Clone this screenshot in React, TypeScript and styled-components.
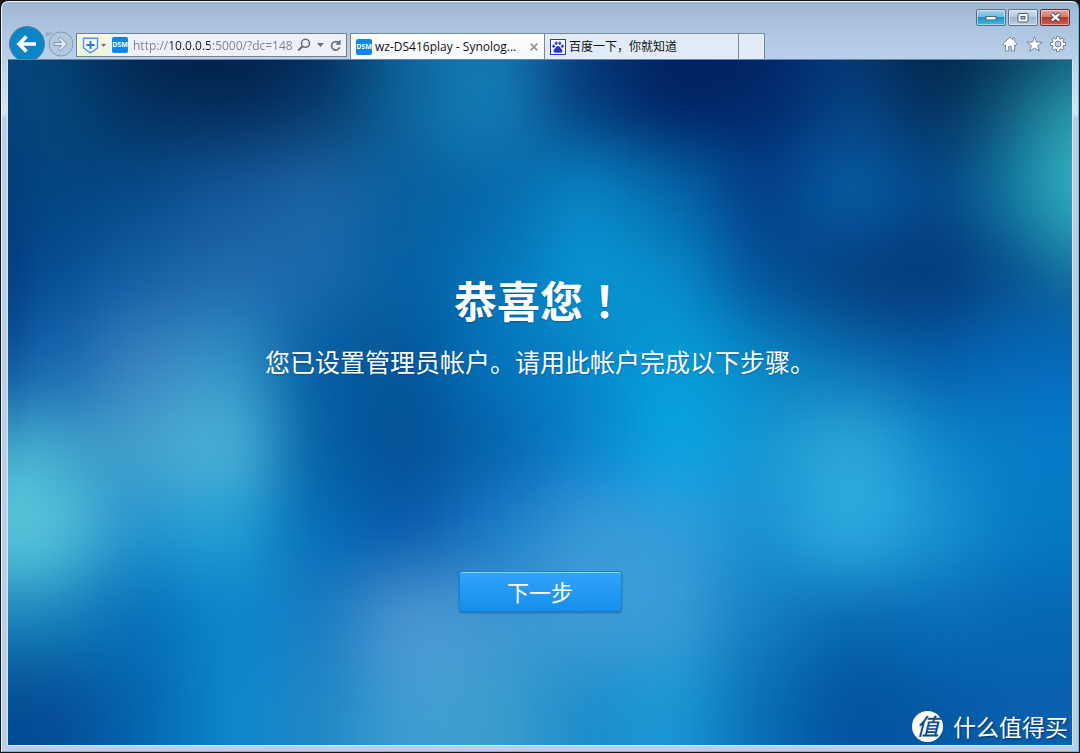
import React from "react";
import styled, { createGlobalStyle, css } from "styled-components";

const uiFont = `"Open Sans", "Noto Sans CJK SC", sans-serif`;
const cjkFont = `"Noto Sans CJK SC", "Noto Sans", sans-serif`;

const GlobalStyle = createGlobalStyle`
  *, *::before, *::after { box-sizing: border-box; }
  html, body { margin: 0; background: #0a0a0c; }
  body { font-family: ${uiFont}; font-size: 12px; }
  button { padding: 0; border: 0; background: none; font: inherit; cursor: pointer; }
`;

const Desktop = styled.div`
  min-height: 100vh;
  padding: 1px;
  display: flex;
  background: #14161c;
`;

const WindowFrame = styled.div`
  flex: 1;
  min-width: 0;
  display: flex;
  flex-direction: column;
  border: 1px solid #eef5fc;
  border-right-color: #4cc9e6;
  border-bottom-color: #4cc9e6;
  border-radius: 7px 7px 0 0;
  background: linear-gradient(#9bb4cf 0, #a9c1dc 18px, #bad1eb 58px, #d6e4f4 112px, #b9cfe9 116px);
`;

const Header = styled.header`
  flex: none;
  height: 57px;
  overflow: hidden;
`;

const CaptionBar = styled.div`
  height: 31px;
  padding: 7px 8px 0 0;
  display: flex;
  justify-content: flex-end;
  gap: 2px;
`;

type Tone = "blue" | "plain" | "red";
const tones = {
  blue: "linear-gradient(#a8d6ec 0, #6fbadc 45%, #1c8fc0 50%, #3cc0e6 100%)",
  plain: "linear-gradient(#cfdff0 0, #b9cce2 45%, #9fb6d0 50%, #bcd2ea 100%)",
  red: "linear-gradient(#e3a79d 0, #d07c70 45%, #b23a2a 50%, #cf6150 100%)",
};

const CaptionButton = styled.button<{ $tone: Tone }>`
  width: 30px;
  height: 17px;
  display: grid;
  place-items: center;
  border: 1px solid ${(p) => (p.$tone === "red" ? "#6b2f3c" : "#5d7189")};
  border-radius: 2px;
  background: ${(p) => tones[p.$tone]};
  box-shadow: inset 0 0 0 1px rgba(255, 255, 255, 0.45);
`;

const Toolbar = styled.div`
  height: 26px;
  padding: 0 10px 0 6px;
  display: flex;
  align-items: flex-start;
`;

const NavButtons = styled.div`
  flex: none;
  display: flex;
  width: 68px;
  margin-top: -8px;

  svg {
    display: block;
  }
`;

const NavButton = styled.button<{ $w: number }>`
  width: ${(p) => p.$w}px;
  height: 38px;
`;

const AddressBar = styled.form`
  flex: none;
  width: 271px;
  height: 24px;
  margin-right: 3px;
  display: flex;
  align-items: center;
  border: 1px solid #747f8c;
  background: #edf2fa;
`;

const ShieldButton = styled.button`
  flex: none;
  width: 33px;
  height: 22px;
  margin-right: 2px;
  display: flex;
  align-items: center;
  justify-content: center;
  gap: 2px;
  background: linear-gradient(#f5f9e6, #edf3d8);
`;

const SiteBadge = styled.span`
  flex: none;
  width: 16px;
  height: 16px;
  border-radius: 2px;
  background: #0d87e9;
  color: #fff;
  font: 700 7px/16px "Open Sans", sans-serif;
  text-align: center;
`;

const UrlField = styled.input`
  flex: 1;
  min-width: 0;
  height: 22px;
  margin-left: 4px;
  padding: 0 0 0 1px;
  border: 0;
  outline: 0;
  font-family: ${uiFont};
  font-size: 12px;
  color: transparent;
  background: linear-gradient(90deg, #7c8087 36px, #16181c 36px, #16181c 78px, #7c8087 78px);
  background-clip: text;
  -webkit-background-clip: text;
`;

const FieldButton = styled.button<{ $w: number }>`
  flex: none;
  width: ${(p) => p.$w}px;
  height: 22px;
  display: grid;
  place-items: center;
`;

const Tabs = styled.nav`
  display: flex;
  height: 26px;
  border-top: 1px solid #78899c;
  border-left: 1px solid #78899c;
`;

const Tab = styled.div<{ $active?: boolean; $narrow?: boolean }>`
  width: ${(p) => (p.$narrow ? 26 : 194)}px;
  height: 26px;
  padding-left: 5px;
  display: flex;
  align-items: center;
  gap: 3px;
  border-right: 1px solid #78899c;
  background: ${(p) => (p.$active ? "linear-gradient(#ffffff, #f4f8fc)" : "#e2ecf9")};
`;

const TabLink = styled.a`
  flex: 1;
  min-width: 0;
  color: #101010;
  font-size: 12px;
  line-height: 24px;
  white-space: nowrap;
  text-decoration: none;
`;

const TabClose = styled.button`
  width: 20px;
  height: 24px;
  display: grid;
  place-items: center;
`;

const Tools = styled.div`
  margin-left: auto;
  display: flex;
  gap: 4px;
`;

const ToolButton = styled.button`
  width: 20px;
  height: 22px;
  display: grid;
  place-items: center;
`;

const Page = styled.main`
  position: relative;
  flex: 1;
  margin: 0 5px 5px;
  border: 1px solid #dbe8f6;
  border-top-color: #6686a5;
  overflow: hidden;
  background: #0568b0;
  color: #fff;
  font-family: ${cjkFont};
`;

const Wallpaper = styled.svg`
  position: absolute;
  inset: 0;
  width: 100%;
  height: 100%;
`;

const Welcome = styled.section`
  position: relative;
  padding: 207px 16px 80px;
  display: flex;
  flex-direction: column;
  align-items: center;
  text-align: center;
`;

const textShadow = css`
  text-shadow: 0 1px 2px rgba(0, 30, 80, 0.35);
`;

const Title = styled.h1`
  margin: 0;
  font-size: 43px;
  font-weight: 700;
  line-height: 64px;
  ${textShadow}
`;

const CenteredMark = styled.span`
  font-family: "Noto Sans CJK TC", sans-serif;
`;

const Message = styled.p`
  margin: 10px 0 0;
  font-size: 25px;
  line-height: 40px;
  ${textShadow}
`;

const NextButton = styled.button`
  && {
    width: 163px;
    height: 41px;
    margin-top: 190px;
    border: 1px solid #1b7fce;
    border-radius: 3px;
    background: linear-gradient(#30a4fd, #168fe8);
    box-shadow: inset 0 1px 0 #8fd0ff, 0 1px 2px rgba(0, 50, 110, 0.4);
    color: #fff;
    font-size: 22px;
    line-height: 39px;
  }
`;

const Watermark = styled.div`
  position: absolute;
  right: 4px;
  bottom: 2px;
  display: flex;
  align-items: center;
  gap: 10px;
  font-size: 23px;
  line-height: 34px;
  white-space: nowrap;
  text-shadow: 1px 1px 2px rgba(0, 20, 60, 0.6);
`;

const Seal = styled.span`
  width: 31px;
  height: 31px;
  border-radius: 50%;
  background: #fff;
  color: #0b4f92;
  font-size: 23px;
  font-weight: 500;
  font-style: italic;
  line-height: 29px;
  text-align: center;
  text-shadow: none;
`;

/* Colour mesh of the wallpaper, softened by a wide blur. */
const mesh = [
  "04457a 04305e 032a58 063768 0c639a 1379b3 063c7b 012464 022c6e 054282 042f5b 126584",
  "02447f 054a88 13579a 1c66a5 09609f 0667a9 0886c6 0568aa 033b87 0560a7 04478a 1684a5",
  "044c92 1460a4 216aae 1a69ad 045fa2 0576ba 0896d1 078cca 045097 044283 03397a 08558f",
  "1464ae 3c83c0 3192c6 045da2 045598 0475bd 0684c8 079ad6 0886c4 0a6fb2 055fab 0569bb",
  "3a9bc8 44a0cb 48b0d6 045fa3 044f94 0563ac 0882ce 09a4e2 1595d0 2aa3d6 0c85ca 077cc8",
  "4cb9d4 2493cf 1f9fd5 056db6 0759ab 1d7cc7 3b9ad7 349edb 188fd0 2aaae0 1690d0 067ac4",
  "1882bb 056eb8 0a86ca 1b7ac1 4b93cf 3b97d2 429cd7 3c9dd7 137ec2 0869b1 0a6eb8 0667b4",
  "044c95 0565ad 0d87cd 1f86c4 3e9ed2 3c9dcc 1d8dca 1a99d4 086db2 02529c 0459a5 0960ae",
].map((row) => row.split(" "));

const glows = [
  { cx: 10, cy: 450, rx: 70, ry: 90, color: "#5fd2de", strength: 0.5 },
  { cx: 1080, cy: 112, rx: 66, ry: 120, color: "#38b9c6", strength: 0.75 },
  { cx: 464, cy: 42, rx: 70, ry: 70, color: "#1787c0", strength: 0.25 },
  { cx: 200, cy: 385, rx: 74, ry: 90, color: "#58bbd8", strength: 0.2 },
  { cx: 850, cy: 425, rx: 90, ry: 96, color: "#35b4e2", strength: 0.3 },
  { cx: 670, cy: 330, rx: 80, ry: 100, color: "#06a9e4", strength: 0.2 },
  { cx: 880, cy: 225, rx: 90, ry: 70, color: "#03316f", strength: 0.2 },
  { cx: 715, cy: -10, rx: 120, ry: 80, color: "#011a5c", strength: 0.4 },
  { cx: 200, cy: -20, rx: 130, ry: 60, color: "#021a42", strength: 0.6 },
  { cx: 955, cy: -20, rx: 120, ry: 60, color: "#031d40", strength: 0.5 },
  { cx: 425, cy: 580, rx: 80, ry: 90, color: "#62a8dc", strength: 0.2 },
  { cx: 0, cy: 200, rx: 30, ry: 160, color: "#032f70", strength: 0.4 },
];

function WallpaperArt() {
  return (
    <Wallpaper viewBox="0 0 1064 686" preserveAspectRatio="none" aria-hidden="true">
      <defs>
        <filter id="soften" filterUnits="userSpaceOnUse" x="-200" y="-200" width="1464" height="1086" colorInterpolationFilters="sRGB">
          <feGaussianBlur stdDeviation="34" />
        </filter>
        {glows.map((g, i) => (
          <radialGradient id={`glow${i}`} key={i}>
            <stop offset="0" stopColor={g.color} stopOpacity={g.strength} />
            <stop offset="0.2" stopColor={g.color} stopOpacity={g.strength * 0.88} />
            <stop offset="0.4" stopColor={g.color} stopOpacity={g.strength * 0.6} />
            <stop offset="0.6" stopColor={g.color} stopOpacity={g.strength * 0.3} />
            <stop offset="0.8" stopColor={g.color} stopOpacity={g.strength * 0.09} />
            <stop offset="1" stopColor={g.color} stopOpacity="0" />
          </radialGradient>
        ))}
      </defs>
      <g filter="url(#soften)" shapeRendering="crispEdges">
        {mesh.map((row, r) =>
          row.map((c, i) => {
            const x0 = i === 0 ? -200 : Math.round(i * 88.67);
            const x1 = i === 11 ? 1264 : Math.round((i + 1) * 88.67);
            const y0 = r === 0 ? -200 : Math.round(r * 85.75);
            const y1 = r === 7 ? 886 : Math.round((r + 1) * 85.75);
            return <rect key={`${r}-${i}`} x={x0} y={y0} width={x1 - x0} height={y1 - y0} fill={`#${c}`} />;
          })
        )}
      </g>
      {glows.map((g, i) => (
        <ellipse key={i} cx={g.cx} cy={g.cy} rx={g.rx * 1.5} ry={g.ry * 1.5} fill={`url(#glow${i})`} />
      ))}
    </Wallpaper>
  );
}

const BackIcon = () => (
  <svg width="38" height="38" viewBox="0 0 38 38">
    <circle cx="19" cy="19" r="17.5" fill="#0b85c6" stroke="#5c7f9f" />
    <path d="M28 19H12M18.5 11.5 11 19l7.500 7.500" fill="none" stroke="#fff" strokeWidth="3.600" />
  </svg>
);

const ForwardIcon = () => (
  <svg width="30" height="38" viewBox="0 0 30 38">
    <path d="M-7 3Q0 8 9 7.500Q3 9-1 14Z" fill="#93a9c4" opacity=".7" />
    <circle cx="15" cy="19" r="12" fill="#b4c8e0" stroke="#8398b3" />
    <path d="M8 17.500h7.500l-3-3.300 2-1.900 6.600 6.700-6.600 6.700-2-1.900 3-3.300H8z" fill="#dce8f5" stroke="#8095b0" />
  </svg>
);

const Caret = () => (
  <svg width="7" height="4" viewBox="0 0 7 4"><path d="M0 0h7L3.500 4z" fill="#6b7078" /></svg>
);

const SmallCaret = () => (
  <svg width="5" height="3" viewBox="0 0 5 3"><path d="M0 0h5L2.500 3z" fill="#6b7078" /></svg>
);

export default function App() {
  return (
    <>
      <GlobalStyle />
      <Desktop>
        <WindowFrame>
          <Header>
            <CaptionBar>
              <CaptionButton $tone="blue" aria-label="最小化">
                <svg width="12" height="6" viewBox="0 0 12 6"><rect x="1" y="1.500" width="10" height="3.500" fill="#fff" stroke="#4c6580" /></svg>
              </CaptionButton>
              <CaptionButton $tone="plain" aria-label="最大化">
                <svg width="12" height="10" viewBox="0 0 12 10">
                  <rect x="1" y=".5" width="10" height="8.500" rx="1" fill="#fff" stroke="#505d70" />
                  <rect x="4" y="3.500" width="4" height="2.500" fill="#a9bfd8" stroke="#505d70" />
                </svg>
              </CaptionButton>
              <CaptionButton $tone="red" aria-label="关闭">
                <svg width="13" height="11" viewBox="0 0 13 11">
                  <path d="M2.500 1.500 10.500 9M10.500 1.500 2.500 9" stroke="#59364a" strokeWidth="4.200" />
                  <path d="M2.800 1.800 10.200 8.700M10.200 1.800 2.800 8.700" stroke="#fff" strokeWidth="2.400" />
                </svg>
              </CaptionButton>
            </CaptionBar>
            <Toolbar>
              <NavButtons>
                <NavButton $w={38} aria-label="后退"><BackIcon /></NavButton>
                <NavButton $w={30} aria-label="前进"><ForwardIcon /></NavButton>
              </NavButtons>
              <AddressBar onSubmit={(e) => e.preventDefault()}>
                <ShieldButton type="button" aria-label="安全">
                  <svg width="17" height="17" viewBox="0 0 17 17">
                    <path d="M1.500 1.200h14v9.800L8.500 15.800l-7-4.800z" fill="#f4f9ff" stroke="#4f94ee" strokeWidth="1.500" strokeLinejoin="round" />
                    <path d="M8.500 4v8M4.500 8h8" stroke="#2d79e0" strokeWidth="2" />
                  </svg>
                  <SmallCaret />
                </ShieldButton>
                <SiteBadge>DSM</SiteBadge>
                <UrlField aria-label="地址" defaultValue="http://10.0.0.5:5000/?dc=148" />
                <FieldButton $w={22} aria-label="搜索">
                  <svg width="14" height="14" viewBox="0 0 14 14" fill="none" stroke="#6a6e75">
                    <circle cx="8.500" cy="5.300" r="4" strokeWidth="1.600" />
                    <path d="M5.500 8.300 1.200 12.500" strokeWidth="2.200" />
                  </svg>
                </FieldButton>
                <FieldButton $w={10} type="button" aria-label="展开"><Caret /></FieldButton>
                <FieldButton $w={21} type="button" aria-label="刷新">
                  <svg width="12" height="13" viewBox="0 0 12 13">
                    <path d="M9.700 8.300A4.200 4.200 0 1 1 8.300 3.500" fill="none" stroke="#6a6e75" strokeWidth="1.700" />
                    <path d="M10.600.5v5.300H5.500z" fill="#6a6e75" />
                  </svg>
                </FieldButton>
              </AddressBar>
              <Tabs>
                <Tab $active>
                  <SiteBadge>DSM</SiteBadge>
                  <TabLink href="#dsm">wz-DS416play - Synolog...</TabLink>
                  <TabClose aria-label="关闭标签页">
                    <svg width="8" height="8" viewBox="0 0 8 8"><path d="m.7.7 6.600 6.600M7.300.7.7 7.300" stroke="#949494" strokeWidth="1.800" /></svg>
                  </TabClose>
                </Tab>
                <Tab>
                  <svg width="16" height="16" viewBox="0 0 16 16">
                    <rect x=".5" y=".5" width="15" height="15" fill="#fff" stroke="#2932e1" />
                    <g fill="#2932e1">
                      <ellipse cx="3.600" cy="7.200" rx="1.300" ry="1.600" />
                      <ellipse cx="6.200" cy="4.200" rx="1.300" ry="1.700" />
                      <ellipse cx="9.800" cy="4.200" rx="1.300" ry="1.700" />
                      <ellipse cx="12.400" cy="7.200" rx="1.300" ry="1.600" />
                      <path d="M8 7c1.600 0 2 1.400 3 2.400 1.300 1.100 1.700 2 1.300 3.200-.5 1.500-2.200 1.200-4.300 1.200s-3.800.3-4.300-1.200c-.4-1.200 0-2.100 1.300-3.200C6 8.400 6.400 7 8 7z" />
                    </g>
                  </svg>
                  <TabLink href="#baidu">百度一下，你就知道</TabLink>
                </Tab>
                <Tab $narrow />
              </Tabs>
              <Tools>
                <ToolButton aria-label="主页">
                  <svg width="16" height="16" viewBox="0 0 16 16">
                    <path d="M8 1 .8 8l1.400 1.500L3.300 8.600V15h3.500v-4.500h2.400V15h3.500V8.600l1.100.9L15.200 8l-2.500-2.400V2.200h-2v1.500z" fill="#fff" stroke="#76859b" strokeWidth="1" />
                  </svg>
                </ToolButton>
                <ToolButton aria-label="收藏夹">
                  <svg width="17" height="16" viewBox="0 0 17 16">
                    <path d="m8.500.8 2 5.200 5.700.2-4.500 3.500 1.600 5.500-4.800-3.100-4.800 3.100 1.600-5.500L.8 6.200 6.500 6z" fill="#fff" stroke="#76859b" strokeWidth="1" />
                  </svg>
                </ToolButton>
                <ToolButton aria-label="工具">
                  <svg width="16" height="16" viewBox="0 0 16 16">
                    <g stroke="#76859b" strokeWidth="3.800"><path d="M8 .2v15.600M.2 8h15.600M2.500 2.500l11 11M13.500 2.500l-11 11" /></g>
                    <circle cx="8" cy="8" r="6" fill="#76859b" />
                    <g stroke="#fff" strokeWidth="2"><path d="M8 1v14M1 8h14M3.100 3.100l9.800 9.800M12.900 3.100l-9.800 9.800" /></g>
                    <circle cx="8" cy="8" r="5.200" fill="#fff" />
                    <circle cx="8" cy="8" r="3" fill="#b9cfe9" stroke="#76859b" />
                  </svg>
                </ToolButton>
              </Tools>
            </Toolbar>
          </Header>
          <Page lang="zh-CN">
            <WallpaperArt />
            <Welcome>
              <Title>恭喜您<CenteredMark lang="zh-TW">！</CenteredMark></Title>
              <Message>您已设置管理员帐户。请用此帐户完成以下步骤。</Message>
              <NextButton type="button">下一步</NextButton>
            </Welcome>
            <Watermark>
              <Seal>值</Seal>
              <span>什么值得买</span>
            </Watermark>
          </Page>
        </WindowFrame>
      </Desktop>
    </>
  );
}
